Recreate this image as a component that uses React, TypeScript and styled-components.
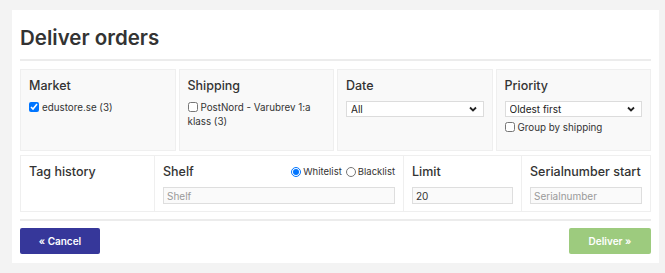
import * as React from "react";
import styled, { createGlobalStyle } from "styled-components";

const GlobalStyle = createGlobalStyle`
  body {
    margin: 0;
    background: #f3f3f3;
    font-family: Inter, "Liberation Sans", sans-serif;
    color: #333;
  }
`;

const Page = styled.div`
  padding: 10px 6px 10px 12px;
`;

const Card = styled.div`
  background: #fff;
  padding: 0 8px 9px;
`;

const Title = styled.h1`
  margin: 0;
  padding: 16px 0 9px;
  font-size: 20.5px;
  font-weight: 600;
  line-height: 24px;
  color: #333;
  border-bottom: 2px solid #ececec;
`;

const Filters = styled.div`
  display: grid;
  grid-template-columns: repeat(4, 1fr);
  gap: 3px;
  margin-top: 8px;
`;

const Panel = styled.div`
  background: #f9f9f9;
  border: 1px solid #efefef;
  height: 82px;
  box-sizing: border-box;
  padding: 7px 8px;
`;

const PanelTitle = styled.div`
  font-size: 12.5px;
  font-weight: 500;
  line-height: 18px;
  margin-bottom: 6px;
  display: flex;
  align-items: center;
  justify-content: space-between;
  white-space: nowrap;
`;

const CheckLabel = styled.label<{ $gap?: number }>`
  display: block;
  font-size: 9.8px;
  line-height: 14px;
  color: #333;
  margin-top: ${(p) => p.$gap ?? 0}px;

  input {
    width: 10px;
    height: 10px;
    margin: 0 3px 0 0;
    vertical-align: -1px;
  }
`;

const Select = styled.select`
  display: block;
  width: 100%;
  height: 16px;
  font-family: inherit;
  font-size: 10px;
  color: #222;
  background: #fff;
  border: 1px solid #dcdcdc;
  padding: 0 4px;
  border-radius: 0;
  appearance: none;
  background-image: url("data:image/svg+xml,%3Csvg xmlns='http://www.w3.org/2000/svg' width='8' height='6' viewBox='0 0 8 6'%3E%3Cpath d='M1 1.5l3 3 3-3' fill='none' stroke='%23222' stroke-width='1.8'/%3E%3C/svg%3E");
  background-repeat: no-repeat;
  background-position: right 6px center;
`;

const Options = styled.div`
  display: grid;
  grid-template-columns: 133px 249px 118px 1fr;
  margin-top: 4px;
  border: 1px solid #efefef;
  height: 57px;
  box-sizing: border-box;
`;

const Cell = styled.div`
  padding: 7px 8px;
  border-left: 1px solid #efefef;
  &:first-child {
    border-left: none;
  }
`;

const Radios = styled.div`
  display: flex;
  gap: 4px;
  font-size: 9.5px;
  font-weight: 400;

  label {
    display: flex;
    align-items: center;
  }
  input {
    width: 10px;
    height: 10px;
    margin: 0 2px 0 0;
  }
`;

const TextInput = styled.input`
  display: block;
  box-sizing: border-box;
  width: 100%;
  height: 17px;
  font-family: inherit;
  font-size: 10px;
  color: #333;
  background: #fafafa;
  border: 1px solid #dedede;
  padding: 0 3px;
  outline: none;

  &::placeholder {
    color: #999;
  }
`;

const Footer = styled.div`
  display: flex;
  justify-content: space-between;
  margin-top: 7px;
  padding-top: 7px;
  border-top: 2px solid #ececec;
`;

const Button = styled.button<{ $variant: "primary" | "success" }>`
  height: 26px;
  width: ${(p) => (p.$variant === "primary" ? 80 : 82)}px;
  border: none;
  border-radius: 2px;
  font-family: inherit;
  font-size: 10px;
  font-weight: 600;
  color: #fff;
  background: ${(p) => (p.$variant === "primary" ? "#36379a" : "#9dcb7e")};
  cursor: pointer;
`;

export default function App() {
  return (
    <Page>
      <GlobalStyle />
      <Card>
        <Title>Deliver orders</Title>
        <Filters>
          <Panel>
            <PanelTitle>Market</PanelTitle>
            <CheckLabel>
              <input type="checkbox" defaultChecked />
              edustore.se (3)
            </CheckLabel>
          </Panel>
          <Panel>
            <PanelTitle>Shipping</PanelTitle>
            <CheckLabel>
              <input type="checkbox" />
              PostNord - Varubrev 1:a klass (3)
            </CheckLabel>
          </Panel>
          <Panel>
            <PanelTitle>Date</PanelTitle>
            <Select defaultValue="all">
              <option value="all">All</option>
            </Select>
          </Panel>
          <Panel>
            <PanelTitle>Priority</PanelTitle>
            <Select defaultValue="oldest">
              <option value="oldest">Oldest first</option>
            </Select>
            <CheckLabel $gap={4}>
              <input type="checkbox" />
              Group by shipping
            </CheckLabel>
          </Panel>
        </Filters>
        <Options>
          <Cell>
            <PanelTitle>Tag history</PanelTitle>
          </Cell>
          <Cell>
            <PanelTitle>
              Shelf
              <Radios>
                <label>
                  <input type="radio" name="shelf" defaultChecked />
                  Whitelist
                </label>
                <label>
                  <input type="radio" name="shelf" />
                  Blacklist
                </label>
              </Radios>
            </PanelTitle>
            <TextInput placeholder="Shelf" />
          </Cell>
          <Cell>
            <PanelTitle>Limit</PanelTitle>
            <TextInput defaultValue="20" />
          </Cell>
          <Cell>
            <PanelTitle>Serialnumber start</PanelTitle>
            <TextInput placeholder="Serialnumber" />
          </Cell>
        </Options>
        <Footer>
          <Button $variant="primary">« Cancel</Button>
          <Button $variant="success">Deliver »</Button>
        </Footer>
      </Card>
    </Page>
  );
}
